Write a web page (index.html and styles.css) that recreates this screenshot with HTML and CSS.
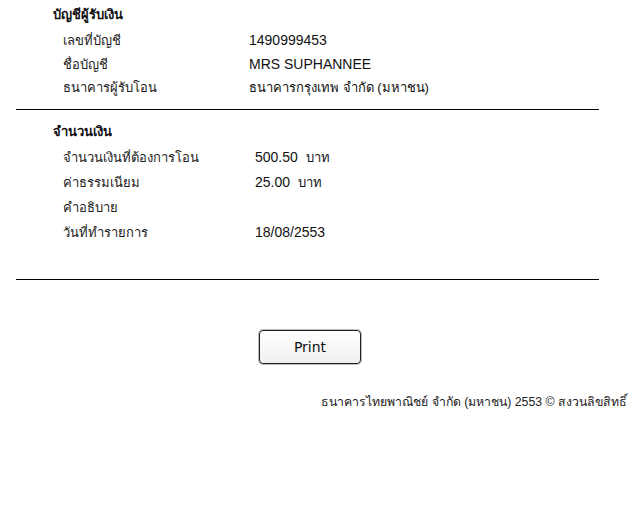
FILE: index.html
```html
<!DOCTYPE html>
<html lang="th">
<head>
    <meta charset="UTF-8">
    <title>โอนเงิน</title>
    <link rel="stylesheet" href="styles.css">
</head>
<body>
    <div class="slip">
        <div class="section">
            <div class="section-title">บัญชีผู้รับเงิน</div>
            <div class="row"><span class="label">เลขที่บัญชี</span><span class="value">1490999453</span></div>
            <div class="row"><span class="label">ชื่อบัญชี</span><span class="value">MRS SUPHANNEE</span></div>
            <div class="row"><span class="label">ธนาคารผู้รับโอน</span><span class="value th">ธนาคารกรุงเทพ จำกัด (มหาชน)</span></div>
        </div>
        <div class="section amount">
            <div class="section-title">จำนวนเงิน</div>
            <div class="row"><span class="label">จำนวนเงินที่ต้องการโอน</span><span class="value">500.50&nbsp; <span class="th">บาท</span></span></div>
            <div class="row"><span class="label">ค่าธรรมเนียม</span><span class="value">25.00&nbsp; <span class="th">บาท</span></span></div>
            <div class="row"><span class="label">คำอธิบาย</span><span class="value"></span></div>
            <div class="row"><span class="label">วันที่ทำรายการ</span><span class="value">18/08/2553</span></div>
        </div>
        <div class="actions">
            <button class="print-btn" type="button">Print</button>
        </div>
    </div>
    <div class="footer">ธนาคารไทยพาณิชย์ จำกัด (มหาชน) 2553 © สงวนลิขสิทธิ์</div>
</body>
</html>
```

FILE: styles.css
```css
body {
    margin: 0;
    padding: 0;
    font-family: "Liberation Sans", Arial, sans-serif;
    font-size: 14px;
    color: #111;
    background: #fff;
}

.slip {
    width: 583px;
    margin-left: 16px;
    padding-top: 3px;
}

.section {
    border-bottom: 1px solid #000;
    padding-bottom: 9px;
}

.section.amount {
    margin-top: 10px;
    padding-bottom: 34px;
}

.section-title {
    font-weight: bold;
    font-size: 13px;
    height: 24px;
    line-height: 24px;
    padding-left: 37px;
    margin-bottom: 1px;
}

.row {
    display: flex;
    align-items: baseline;
    height: 24px;
    line-height: 24px;
    padding-left: 47px;
}

.amount .row {
    height: 25px;
    line-height: 25px;
}

.label {
    width: 186px;
    font-size: 13px;
    color: #222;
}

.amount .label {
    width: 192px;
}

.th {
    font-size: 13px;
}

.actions {
    display: flex;
    justify-content: center;
    padding-top: 50px;
    padding-left: 5px;
}

.print-btn {
    width: 102px;
    height: 34px;
    border: 1px solid #222;
    border-radius: 4px;
    background: linear-gradient(#ffffff, #f0f0f0);
    font-family: "DejaVu Sans", sans-serif;
    font-size: 14px;
    color: #111;
    box-shadow: 0 0 0 1px #bbb;
}

.footer {
    margin-top: 26px;
    text-align: right;
    padding-right: 13px;
    font-size: 12.3px;
    line-height: 24px;
    color: #222;
}
```
